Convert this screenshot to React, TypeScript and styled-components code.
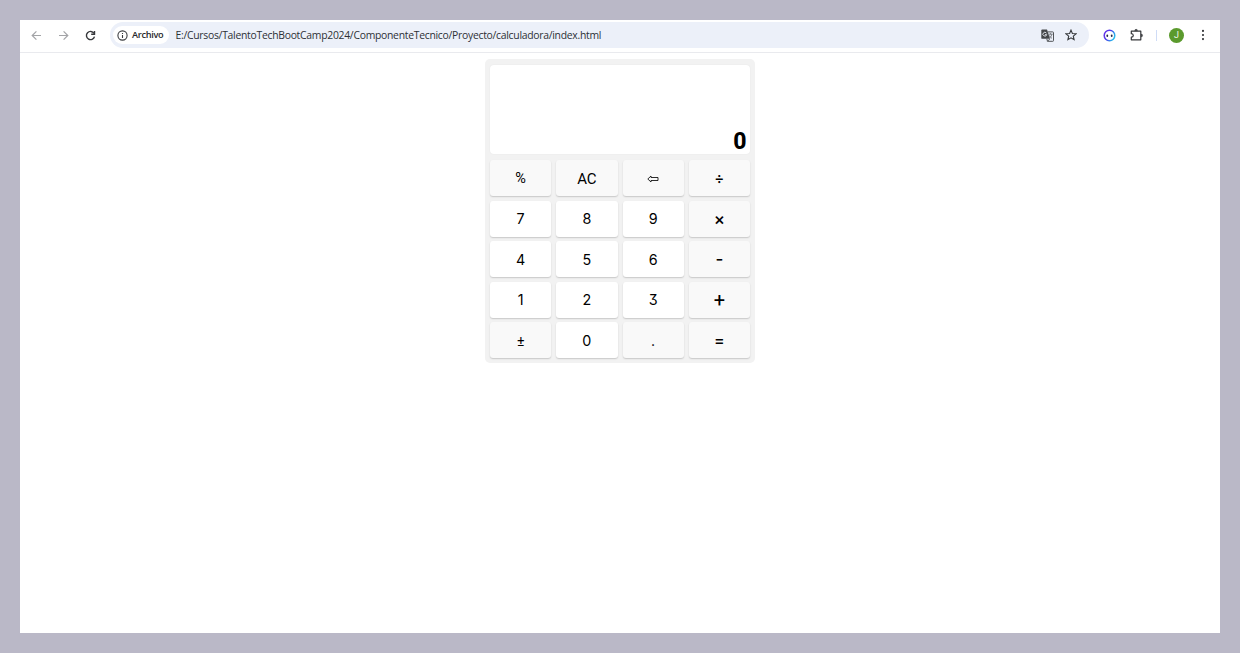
import React from "react";
import styled, { createGlobalStyle } from "styled-components";

const GlobalStyle = createGlobalStyle`
  * { box-sizing: border-box; }
  body { margin: 0; background: #bab8c7; font-family: "Open Sans", "Noto Sans", sans-serif; }
`;

const Desktop = styled.div`
  height: 653px;
  padding: 20px;
  background: #bab8c7;
`;

const BrowserWindow = styled.div`
  height: 613px;
  background: #fff;
`;

const Toolbar = styled.header`
  display: flex;
  align-items: center;
  height: 33px;
  padding: 0 7px 2px 8px;
  border-bottom: 1px solid #e9eaee;
`;

const IconSlot = styled.span<{ $width: number; $end?: boolean }>`
  display: flex;
  flex: none;
  justify-content: center;
  width: ${(p) => p.$width}px;
  margin-left: ${(p) => (p.$end ? "auto" : "0")};
`;

const AddressBar = styled.div`
  display: flex;
  align-items: center;
  flex: none;
  width: 979px;
  height: 26px;
  margin: 0 0 0 12px;
  padding: 0 6px 0 3px;
  border-radius: 13px;
  background: #ecf0f9;
`;

const SchemeChip = styled.span`
  display: flex;
  align-items: center;
  gap: 4px;
  width: 56px;
  height: 18px;
  padding-left: 4px;
  border-radius: 9px;
  background: #fff;
  color: #26282b;
  font-size: 9.2px;
  font-weight: 600;
  letter-spacing: -0.3px;
  line-height: 18px;
`;

const Address = styled.span`
  flex: 1;
  margin-left: 6.5px;
  color: #2d3036;
  font-size: 10.4px;
  letter-spacing: -0.28px;
  line-height: 18px;
  white-space: nowrap;
`;

const Divider = styled.span`
  flex: none;
  width: 1px;
  height: 11px;
  margin: 0 12px 0 11px;
  background: #cfdcf6;
`;

const Avatar = styled.span`
  flex: none;
  width: 15px;
  height: 15px;
  border-radius: 50%;
  background: #5b9a2d;
  color: #eef6e8;
  font: 9px/15px "Roboto", sans-serif;
  text-align: center;
`;

const Page = styled.main`
  display: flex;
  justify-content: center;
  padding-top: 6px;
`;

const Calculator = styled.section`
  width: 270px;
  height: 304px;
  padding: 6px 5px 5px;
  border-radius: 5px;
  background: #f2f2f2;
  color: #000;
  font-family: "Inter", sans-serif;
`;

const Display = styled.div`
  display: flex;
  align-items: flex-end;
  justify-content: flex-end;
  height: 89px;
  padding: 0 3.5px 0 0;
  border-radius: 4px;
  background: #fff;
  box-shadow: 0 0 2px rgba(0, 0, 0, 0.06);
  font-family: "Roboto", sans-serif;
  font-size: 23px;
  font-weight: 800;
  line-height: 24px;
`;

const Keypad = styled.div`
  display: grid;
  grid-template-columns: repeat(4, 1fr);
  grid-auto-rows: 36px;
  gap: 4.5px 5px;
  margin-top: 6.2px;
`;

const Key = styled.button<{ $muted?: boolean; $size?: number; $weight?: number; $face?: string; $lift?: number }>`
  display: flex;
  align-items: center;
  justify-content: center;
  padding: 1px 0 ${(p) => p.$lift ?? 0}px;
  border: 0;
  border-radius: 3px;
  background: ${(p) => (p.$muted ? "#f9f9f9" : "#fff")};
  box-shadow: 0 1px 1.5px rgba(0, 0, 0, 0.18);
  color: #000;
  font-family: ${(p) => p.$face ?? '"Inter"'}, sans-serif;
  font-feature-settings: "cv09";
  font-size: ${(p) => p.$size ?? 14.3}px;
  font-weight: ${(p) => p.$weight ?? 400};
  line-height: 20px;
`;

const Arrow = ({ forward = false }: { forward?: boolean }) => (
  <svg width="11" height="11" viewBox="0 0 11 11" fill="none" stroke="#a3a4a7" strokeWidth="1.2">
    <path d={forward ? "M1 5.5H9.5M5.6 1.3L9.8 5.5L5.6 9.7" : "M10 5.5H1.5M5.4 1.3L1.2 5.5L5.4 9.7"} />
  </svg>
);

const Reload = () => (
  <svg width="11" height="11" viewBox="0 0 11 11" fill="none" stroke="#36383b" strokeWidth="1.4">
    <path d="M9 3.3A4.1 4.1 0 1 0 9.5 6.6" />
    <path d="M6.2 4.2H9.5V1" />
  </svg>
);

const Info = () => (
  <svg width="11" height="11" viewBox="0 0 11 11" fill="none" stroke="#3b3d40" strokeWidth="1.1">
    <circle cx="5.5" cy="5.5" r="4.6" />
    <path d="M5.5 4.9V8M5.5 2.9V4" />
  </svg>
);

const Translate = () => (
  <svg width="13" height="13" viewBox="0 0 13 13" fill="none">
    <path d="M1.2 .5H6L9 9.8H1.2Q.3 9.8.3 8.9V1.4Q.3.5 1.2.5Z" fill="#45474a" />
    <path d="M6.6 2.9H11.8Q12.5 2.9 12.5 3.6V11.6Q12.5 12.3 11.8 12.3H6.5L5.8 9.8" stroke="#515356" />
    <path d="M8.9 9.8L6.5 12.3" stroke="#515356" />
    <path d="M5.4 4.1A1.9 1.9 0 1 0 5.7 5.6H3.9" stroke="#e8ebf2" strokeWidth=".9" />
    <path d="M7.5 5.2H11.6M9.5 4.2V5.2M10.9 5.3Q10.3 7.7 8.5 8.9M8.1 6.4Q9.3 8.5 11 9.3" stroke="#606266" strokeWidth=".8" />
  </svg>
);

const Star = () => (
  <svg width="12" height="12" viewBox="0 0 12 12" fill="none" stroke="#36383b" strokeWidth="1.1">
    <path d="M6 1.1L7.4 4.5L11 4.8L8.3 7.1L9.1 10.7L6 8.8L2.9 10.7L3.7 7.1L1 4.8L4.6 4.5Z" />
  </svg>
);

const Assistant = () => (
  <svg width="13" height="13" viewBox="0 0 13 13" fill="none">
    <defs>
      <linearGradient id="ring" x1="0" y1="0" x2="1" y2=".5">
        <stop stopColor="#6930e8" />
        <stop offset=".5" stopColor="#513ce9" />
        <stop offset="1" stopColor="#28b9ed" />
      </linearGradient>
    </defs>
    <circle cx="6.5" cy="6.5" r="5.3" stroke="url(#ring)" strokeWidth="1.5" />
    <ellipse cx="4.3" cy="6.7" rx=".9" ry="1.2" fill="#292948" />
    <ellipse cx="8.7" cy="6.7" rx=".9" ry="1.2" fill="#292948" />
  </svg>
);

const Puzzle = () => (
  <svg width="14" height="14" viewBox="0 0 14 14" fill="none" stroke="#36383b" strokeWidth="1.2" strokeLinejoin="round">
    <path d="M1.3 3.1H10.8V11.8H1.3V9.2Q3.3 9.2 3.3 7.5T1.3 5.7Z" />
    <path d="M4.7 2.7A1.4 1.4 0 0 1 7.5 2.7ZM11.2 6.1A1.4 1.4 0 0 1 11.2 8.9Z" fill="#36383b" strokeWidth=".4" />
  </svg>
);

const Menu = () => (
  <svg width="4" height="12" viewBox="0 0 4 12" fill="#303235">
    <circle cx="2" cy="1.9" r="1.05" />
    <circle cx="2" cy="6" r="1.05" />
    <circle cx="2" cy="10.1" r="1.05" />
  </svg>
);

const Backspace = () => (
  <svg width="12" height="8" viewBox="0 0 12 8" fill="none" stroke="#151515" strokeWidth=".9">
    <path d="M.8 4L4 1V2.5H11V5.5H4V7Z" />
  </svg>
);

type KeySpec = {
  label: React.ReactNode;
  name?: string;
  muted?: boolean;
  size?: number;
  weight?: number;
  face?: string;
  lift?: number;
};

const keys: KeySpec[] = [
  { label: "%", muted: true, size: 14.5, face: '"Roboto"' },
  { label: "AC", muted: true, size: 15, face: '"Roboto"' },
  { label: <Backspace />, name: "Borrar", muted: true },
  { label: "÷", muted: true, weight: 500, size: 15 },
  { label: "7" }, { label: "8" }, { label: "9" },
  { label: "×", muted: true, weight: 500, size: 17, lift: 1 },
  { label: "4" }, { label: "5" }, { label: "6" },
  { label: "-", muted: true, weight: 500, size: 17, lift: 2 },
  { label: "1" }, { label: "2" }, { label: "3" },
  { label: "+", muted: true, size: 20, face: '"Roboto"' },
  { label: "±", muted: true, size: 14, face: '"Roboto"' },
  { label: "0" },
  { label: ".", muted: true },
  { label: "=", muted: true, weight: 500, size: 16, lift: 2 },
];

export default function App() {
  return (
    <>
      <GlobalStyle />
      <Desktop>
        <BrowserWindow>
          <Toolbar>
            <IconSlot $width={17}><Arrow /></IconSlot>
            <IconSlot $width={37}><Arrow forward /></IconSlot>
            <IconSlot $width={16}><Reload /></IconSlot>
            <AddressBar>
              <SchemeChip><Info />Archivo</SchemeChip>
              <Address>E:/Cursos/TalentoTechBootCamp2024/ComponenteTecnico/Proyecto/calculadora/index.html</Address>
              <IconSlot $width={24}><Translate /></IconSlot>
              <IconSlot $width={24}><Star /></IconSlot>
            </AddressBar>
            <IconSlot $width={40}><Assistant /></IconSlot>
            <IconSlot $width={16}><Puzzle /></IconSlot>
            <Divider />
            <Avatar>J</Avatar>
            <IconSlot $width={20} $end><Menu /></IconSlot>
          </Toolbar>
          <Page>
            <Calculator>
              <Display>0</Display>
              <Keypad>
                {keys.map((key, index) => (
                  <Key
                    key={index}
                    aria-label={key.name}
                    $muted={key.muted}
                    $size={key.size}
                    $weight={key.weight}
                    $face={key.face}
                    $lift={key.lift}
                  >
                    {key.label}
                  </Key>
                ))}
              </Keypad>
            </Calculator>
          </Page>
        </BrowserWindow>
      </Desktop>
    </>
  );
}
